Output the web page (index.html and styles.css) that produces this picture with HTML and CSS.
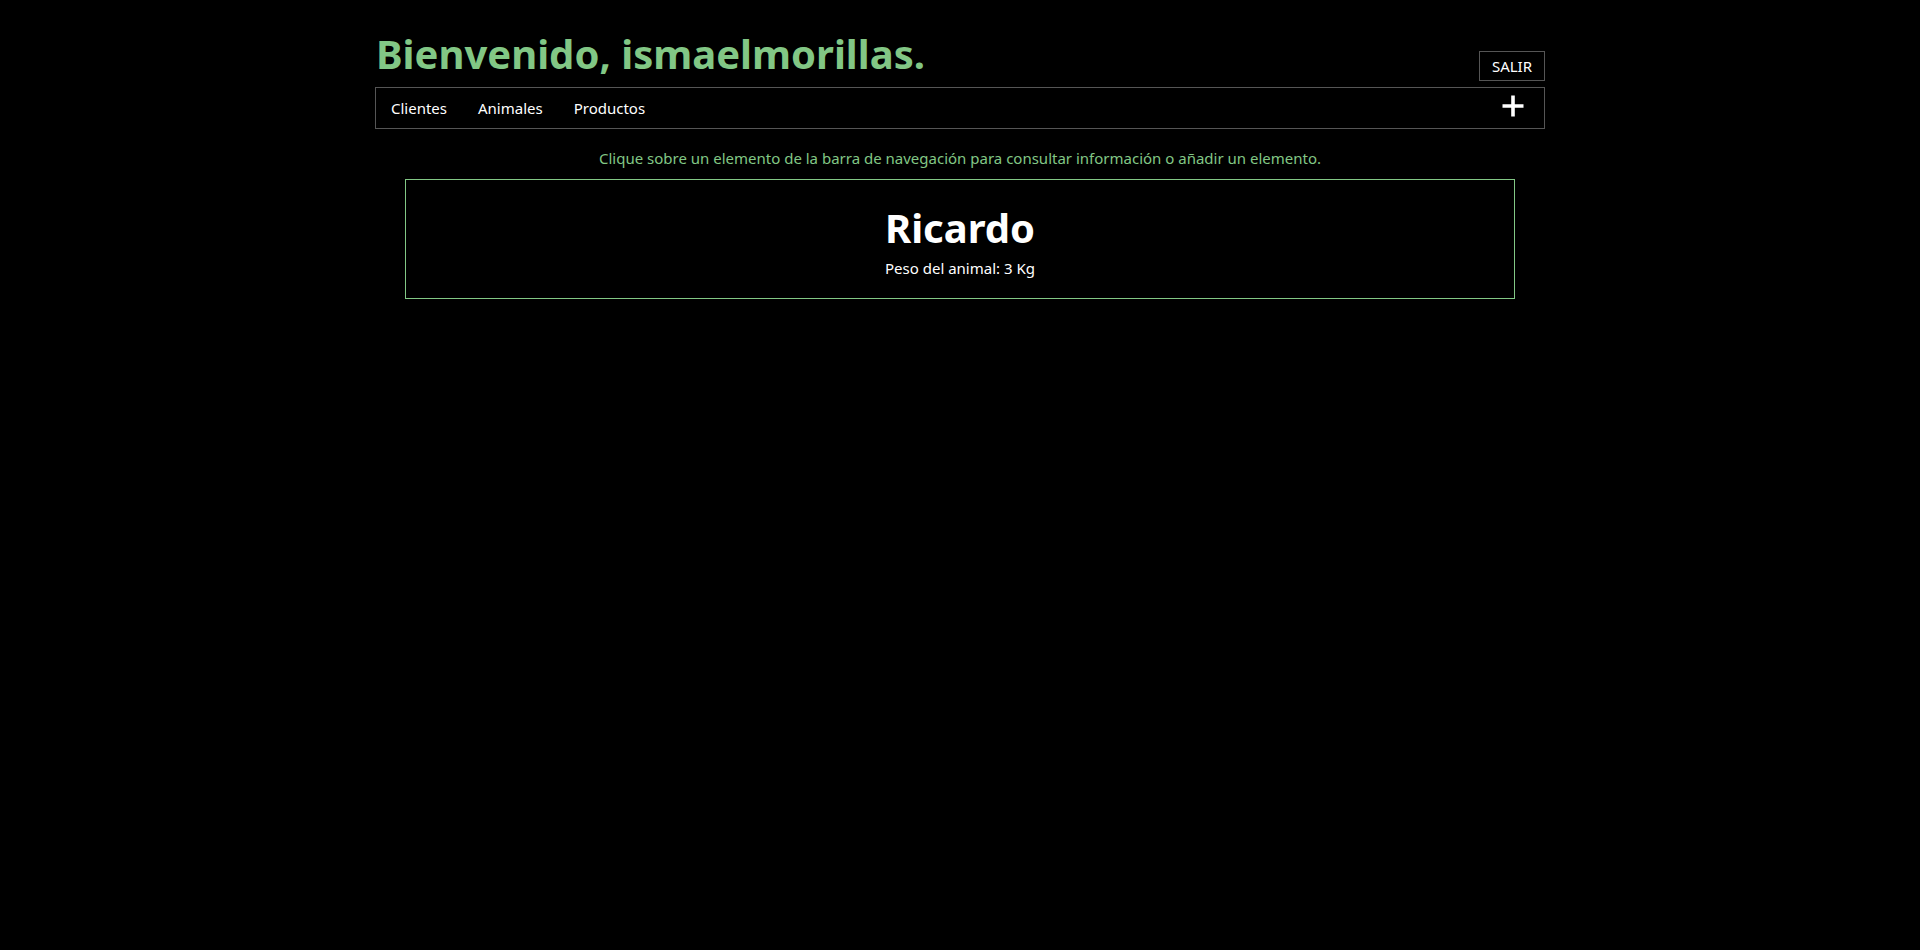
FILE: index.html
```html
<!DOCTYPE html>
<html lang="es">
<head>
<meta charset="utf-8">
<title>Bienvenido</title>
<link rel="stylesheet" href="styles.css">
</head>
<body>
<div class="container">
  <header class="header">
    <h1 class="title">Bienvenido, ismaelmorillas.</h1>
    <a class="logout" href="#">SALIR</a>
  </header>
  <nav class="navbar">
    <ul class="nav-links">
      <li><a href="#">Clientes</a></li>
      <li><a href="#">Animales</a></li>
      <li><a href="#">Productos</a></li>
    </ul>
    <a class="add" href="#" aria-label="Añadir">
      <svg width="22" height="22" viewBox="0 0 22 22"><path d="M11 0.5V21.5M0.5 11H21.5" stroke="#fff" stroke-width="3.6" fill="none"/></svg>
    </a>
  </nav>
  <p class="hint">Clique sobre un elemento de la barra de navegación para consultar información o añadir un elemento.</p>
  <section class="card">
    <h2 class="card-title">Ricardo</h2>
    <p class="card-text">Peso del animal: 3 Kg</p>
  </section>
</div>
</body>
</html>
```
FILE: styles.css
```css
html, body {
  margin: 0;
  padding: 0;
  background: #000;
  color: #fff;
  font-family: "Noto Sans", "Open Sans", sans-serif;
  font-size: 15px;
}

.container {
  width: 1170px;
  margin: 0 auto;
}

.header {
  display: flex;
  justify-content: space-between;
  align-items: flex-start;
  padding-top: 32px;
  height: 49px;
}

.title {
  margin: 0;
  font-size: 40px;
  font-weight: 700;
  line-height: 44px;
  color: #82c785;
  padding-left: 1px;
}

.logout {
  margin-top: 19px;
  display: block;
  border: 1px solid #555;
  padding: 4px 12px;
  line-height: 20px;
  font-size: 15px;
  color: #fff;
  text-decoration: none;
}

.navbar {
  margin-top: 6px;
  display: flex;
  align-items: center;
  border: 1px solid #555;
  height: 40px;
}

.nav-links {
  display: flex;
  list-style: none;
  margin: 0;
  padding: 0;
}

.nav-links a {
  display: block;
  padding: 10px 15px;
  line-height: 20px;
  color: #fff;
  text-decoration: none;
}

.nav-links li:nth-child(n+2) a {
  padding-left: 16px;
}

.add {
  margin-left: auto;
  margin-right: 20px;
  margin-bottom: 5px;
  display: flex;
}

.hint {
  margin: 19px 0 0;
  text-align: center;
  line-height: 20px;
  color: #82c785;
}

.card {
  margin: 11px 30px 0;
  border: 1px solid #82c785;
  padding: 26px 0 20px;
  text-align: center;
}

.card-title {
  margin: 0 0 8px;
  font-size: 40px;
  font-weight: 700;
  line-height: 44px;
  color: #fff;
}

.card-text {
  margin: 0;
  line-height: 20px;
  color: #fff;
}
```
